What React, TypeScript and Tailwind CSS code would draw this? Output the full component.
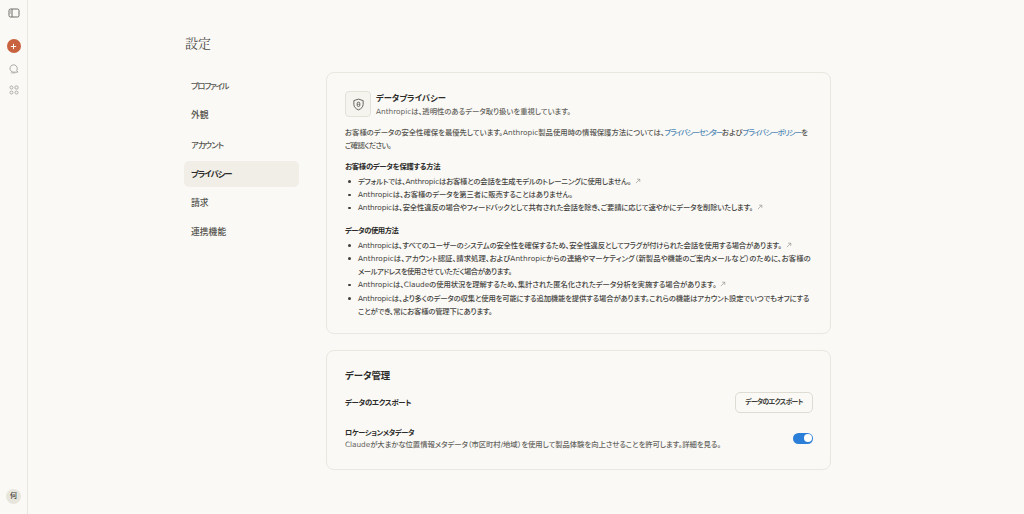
import { useState } from "react";

const font = { fontFamily: '"DejaVu Sans", "Noto Sans CJK JP", sans-serif' };

const navItems = [
  { label: "プロファイル", size: "text-[8.3px] tracking-[-1.2px]" },
  { label: "外観", size: "text-[8.8px]" },
  { label: "アカウント", size: "text-[8.3px] tracking-[-0.9px]" },
  { label: "プライバシー", size: "text-[8.3px] tracking-[-1px]" },
  { label: "請求", size: "text-[8.8px]" },
  { label: "連携機能", size: "text-[8.8px]" },
];

function ExternalArrow() {
  return (
    <svg viewBox="0 0 10 10" className="ml-[4px] inline-block h-[6px] w-[6px] align-baseline text-[#8a8880]" fill="none" stroke="currentColor" strokeWidth="1">
      <path d="M1.5 8.5 8 2M3.5 2H8v4.5" />
    </svg>
  );
}

function Bullet({ children, className = "" }: { children: React.ReactNode; className?: string }) {
  return (
    <li className={`relative whitespace-nowrap pl-[13px] before:absolute before:left-[3px] before:top-[5.5px] before:h-[2.5px] before:w-[2.5px] before:rounded-full before:bg-[#3d3d3a] ${className}`}>
      {children}
    </li>
  );
}

export default function App() {
  const [location, setLocation] = useState(true);

  return (
    <div style={font} className="flex h-[514px] w-[1024px] overflow-hidden bg-[#faf9f5] text-[#3d3d3a] [font-feature-settings:'palt']">
      <aside className="flex w-[28px] shrink-0 flex-col items-center border-r border-[#e9e7e0] pb-[10px] pt-[8px]">
        <svg viewBox="0 0 12 10" className="h-[10px] w-[12px] text-[#6f6e68]" fill="none" stroke="currentColor" strokeWidth="1">
          <rect x="1" y="1" width="10" height="8" rx="1.5" />
          <path d="M4 1v8" />
          <path d="M2 3h1M2 5h1" strokeWidth="0.7" />
        </svg>
        <button className="mt-[21px] flex h-[14px] w-[14px] items-center justify-center rounded-full bg-[#c9623f]">
          <svg viewBox="0 0 8 8" className="h-[7px] w-[7px] text-white" fill="none" stroke="currentColor" strokeWidth="1.1">
            <path d="M4 1v6M1 4h6" />
          </svg>
        </button>
        <svg viewBox="0 0 12 12" className="mt-[10px] h-[11px] w-[11px] text-[#a3a19a]" fill="none" stroke="currentColor" strokeWidth="1">
          <path d="M9.5 8.2A4 4 0 1 0 6 10h4.8z" />
          <path d="M3 10.8h5" strokeWidth="0.8" />
        </svg>
        <svg viewBox="0 0 12 12" className="mt-[11px] h-[10px] w-[10px] text-[#a3a19a]" fill="none" stroke="currentColor" strokeWidth="1">
          <circle cx="3" cy="3" r="1.8" />
          <rect x="7.2" y="1.2" width="3.6" height="3.6" rx="1" />
          <circle cx="3" cy="9" r="1.8" />
          <circle cx="9" cy="9" r="1.8" />
        </svg>
        <div className="mt-auto flex h-[15px] w-[15px] items-center justify-center rounded-full bg-[#e8e6dc] text-[7px] font-medium text-[#3d3d3a]">
          何
        </div>
      </aside>

      <main className="flex flex-1 pl-[156px] pt-[35px]">
        <div className="w-[115px] shrink-0">
          <h1 className="ml-px text-[13px] leading-[18px] text-[#4a4945]" style={{ fontFamily: '"Liberation Serif", "Noto Serif CJK JP", "Noto Sans CJK JP", serif' }}>
            設定
          </h1>
          <nav className="mt-[20px] flex flex-col gap-[3px]">
            {navItems.map((item) => (
              <a
                key={item.label}
                className={`flex h-[26.3px] items-center rounded-[5px] pl-[7px] ${item.size} ${
                  item.label === "プライバシー" ? "bg-[#f0eee6] font-bold text-[#2b2b29]" : "font-medium text-[#55544f]"
                }`}
              >
                {item.label}
              </a>
            ))}
          </nav>
        </div>

        <div className="ml-[27px] w-[505px] pt-[37px]">
          <section className="h-[262px] rounded-[8px] border border-[#e9e7e0] pl-[18px] pr-[17px] pt-[17px] text-[7.35px] font-medium leading-[13.3px]">
            <div className="flex items-center gap-[5px]">
              <div className="flex h-[26px] w-[26px] items-center justify-center rounded-[4px] border border-[#e3e1d9] bg-[#f5f4ee]">
                <svg viewBox="0 0 14 14" className="h-[13px] w-[13px] text-[#5c5b56]" fill="none" stroke="currentColor" strokeWidth="1">
                  <path d="M7 1.2 12 2.8v4c0 2.8-2 4.8-5 6-3-1.2-5-3.2-5-6v-4z" />
                  <rect x="5.6" y="4.4" width="2.8" height="4.8" rx="1.4" />
                  <path d="M5.8 6.8h2.4" strokeWidth="0.7" />
                </svg>
              </div>
              <div className="pt-[2px]">
                <h2 className="text-[8.3px] font-bold leading-[13px] text-[#2b2b29]">データプライバシー</h2>
                <p className="whitespace-nowrap leading-[13px] text-[#65645e]">Anthropicは、透明性のあるデータ取り扱いを重視しています。</p>
              </div>
            </div>

            <p className="mt-[7.5px] whitespace-nowrap text-[#55544f]">
              お客様のデータの安全性確保を最優先しています。Anthropic製品使用時の情報保護方法については、
              <a className="tracking-[-1px] text-[#4f88b5]">プライバシーセンター</a>および<a className="tracking-[-0.9px] text-[#4f88b5]">プライバシーポリシー</a>を
              <br />
              <span className="tracking-[-0.6px]">ご確認ください。</span>
            </p>

            <h3 className="mt-[7.5px] font-bold tracking-[-0.3px] text-[#2b2b29]">お客様のデータを保護する方法</h3>
            <ul className="mt-[2px] text-[#45443f]">
              <Bullet className="tracking-[-0.2px]">デフォルトでは、Anthropicはお客様との会話を生成モデルのトレーニングに使用しません。<ExternalArrow /></Bullet>
              <Bullet className="tracking-[-0.06px]">Anthropicは、お客様のデータを第三者に販売することはありません。</Bullet>
              <Bullet className="tracking-[-0.15px]">Anthropicは、安全性違反の場合やフィードバックとして共有された会話を除き、ご要請に応じて速やかにデータを削除いたします。<ExternalArrow /></Bullet>
            </ul>

            <h3 className="mt-[9px] font-bold tracking-[-0.5px] text-[#2b2b29]">データの使用方法</h3>
            <ul className="mt-[1.5px] text-[#45443f]">
              <Bullet className="tracking-[-0.18px]">Anthropicは、すべてのユーザーのシステムの安全性を確保するため、安全性違反としてフラグが付けられた会話を使用する場合があります。<ExternalArrow /></Bullet>
              <Bullet>
                <span className="tracking-[0.06px]">Anthropicは、アカウント認証、請求処理、およびAnthropicからの連絡やマーケティング（新製品や機能のご案内メールなど）のために、お客様の</span>
                <br />
                <span className="tracking-[-0.5px]">メールアドレスを使用させていただく場合があります。</span>
              </Bullet>
              <Bullet className="tracking-[-0.04px]">Anthropicは、Claudeの使用状況を理解するため、集計された匿名化されたデータ分析を実施する場合があります。<ExternalArrow /></Bullet>
              <Bullet>
                <span className="tracking-[-0.16px]">Anthropicは、より多くのデータの収集と使用を可能にする追加機能を提供する場合があります。これらの機能はアカウント設定でいつでもオフにする</span>
                <br />
                <span className="tracking-[-0.2px]">ことができ、常にお客様の管理下にあります。</span>
              </Bullet>
            </ul>
          </section>

          <section className="mt-[16px] h-[120px] rounded-[8px] border border-[#e9e7e0] pl-[18px] pr-[17px] pt-[18px]">
            <h2 className="text-[9.4px] font-bold leading-[14px] text-[#2b2b29]">データ管理</h2>
            <div className="mt-[7px] flex h-[24px] items-center justify-between">
              <span className="pt-[1px] text-[7.4px] font-bold tracking-[-0.3px] text-[#2b2b29]">データのエクスポート</span>
              <button className="h-[21px] w-[78px] whitespace-nowrap rounded-[5px] border border-[#dedcd3] text-[6.8px] font-bold tracking-[-0.6px] text-[#3d3d3a]">
                データのエクスポート
              </button>
            </div>
            <div className="mt-[13px] flex items-center justify-between">
              <div>
                <div className="text-[7.2px] font-bold leading-[12px] tracking-[-0.35px] text-[#2b2b29]">ロケーションメタデータ</div>
                <div className="whitespace-nowrap text-[7.35px] font-medium leading-[12px] tracking-[-0.05px] text-[#65645e]">
                  Claudeが大まかな位置情報メタデータ（市区町村/地域）を使用して製品体験を向上させることを許可します。詳細を見る。
                </div>
              </div>
              <button
                onClick={() => setLocation(!location)}
                className={`mb-[2px] flex h-[11px] w-[20px] items-center rounded-full px-[1.5px] ${location ? "justify-end bg-[#2c7fd9]" : "justify-start bg-[#c9c7bf]"}`}
              >
                <span className="h-[8px] w-[8px] rounded-full bg-white" />
              </button>
            </div>
          </section>
        </div>
      </main>
    </div>
  );
}
